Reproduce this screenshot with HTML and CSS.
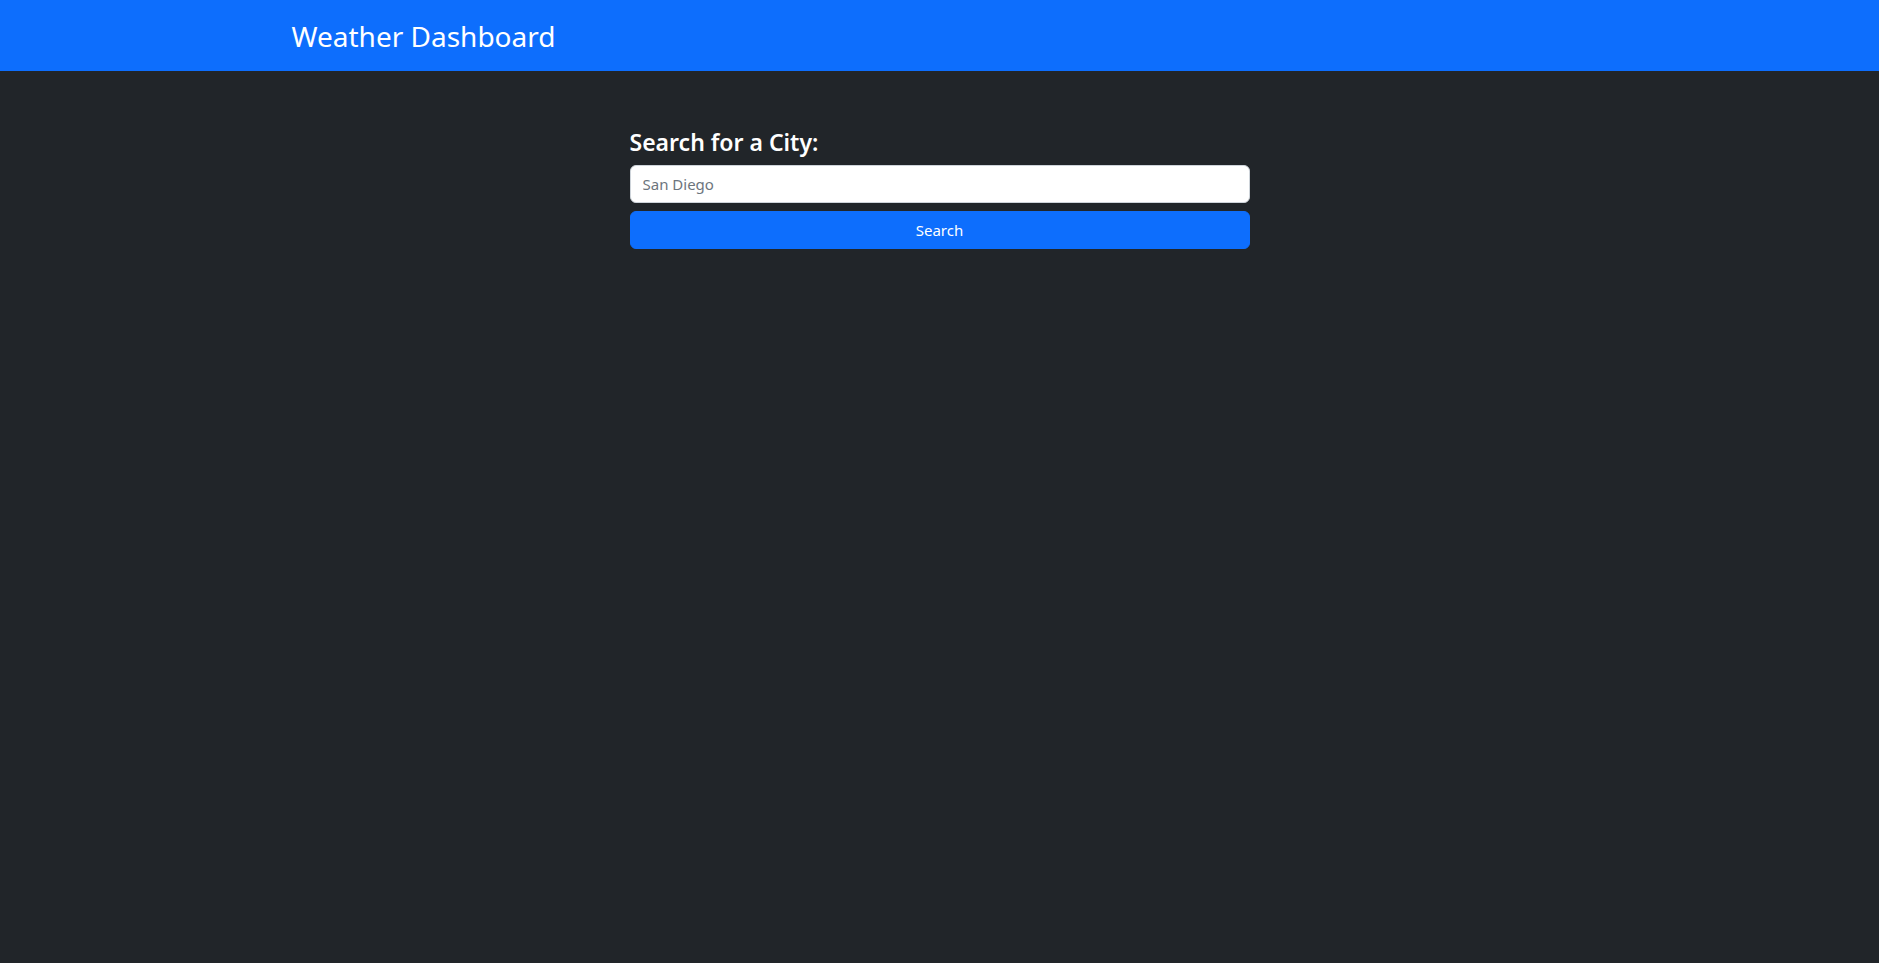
FILE: index.html
```html
<!DOCTYPE html>
<html lang="en">
<head>
<meta charset="utf-8">
<title>Weather Dashboard</title>
<link rel="stylesheet" href="styles.css">
</head>
<body>
<header class="navbar">
  <div class="container">
    <span class="brand">Weather Dashboard</span>
  </div>
</header>
<main class="main">
  <form class="search">
    <label class="search-label" for="city">Search for a City:</label>
    <input class="search-input" id="city" type="text" placeholder="San Diego">
    <button class="search-btn" type="button">Search</button>
  </form>
</main>
</body>
</html>
```
FILE: styles.css
```css
* { box-sizing: border-box; }
html, body { margin: 0; height: 100%; }
body {
  background: #212529;
  font-family: "Noto Sans", "Open Sans", sans-serif;
  color: #fff;
}
.navbar {
  background: #0d6efd;
  height: 71px;
  display: flex;
  align-items: center;
}
.container {
  width: 1320px;
  margin: 0 auto;
  padding: 0 12px;
}
.brand {
  display: block;
  font-size: 28px;
  font-weight: 400;
  color: #fff;
  line-height: 1.2;
  padding-top: 2px;
}
.main {
  display: flex;
  justify-content: center;
  padding-top: 58px;
}
.search {
  width: 620px;
  display: flex;
  flex-direction: column;
}
.search-label {
  font-size: 23px;
  font-weight: 600;
  line-height: 1.2;
  margin-bottom: 8px;
}
.search-input {
  height: 38px;
  border: 1px solid #ced4da;
  border-radius: 6px;
  padding: 6px 12px;
  font-family: inherit;
  font-size: 15px;
  color: #212529;
  background: #fff;
  margin-bottom: 8px;
}
.search-input::placeholder { color: #6c757d; }
.search-btn {
  height: 38px;
  border: 1px solid #0d6efd;
  background: #0d6efd;
  color: #fff;
  border-radius: 6px;
  font-family: inherit;
  font-size: 15px;
}
```
